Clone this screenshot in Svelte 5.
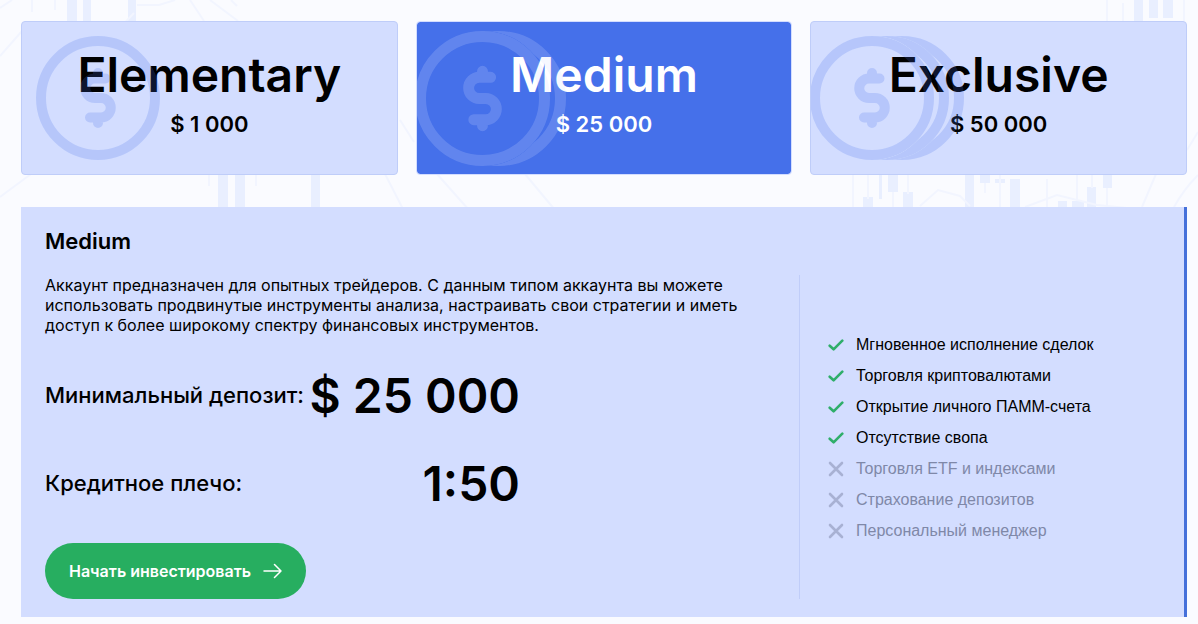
<script>
  const plans = [
    { name: 'Elementary', price: '$ 1 000', coins: 1, r: 57, step: 0, stroke: 10 },
    { name: 'Medium', price: '$ 25 000', coins: 2, r: 62, step: 16, stroke: 11 },
    { name: 'Exclusive', price: '$ 50 000', coins: 3, r: 57, step: 15, stroke: 10 }
  ];
  const features = [
    { text: 'Мгновенное исполнение сделок', on: true },
    { text: 'Торговля криптовалютами', on: true },
    { text: 'Открытие личного ПАММ-счета', on: true },
    { text: 'Отсутствие свопа', on: true },
    { text: 'Торговля ETF и индексами', on: false },
    { text: 'Страхование депозитов', on: false },
    { text: 'Персональный менеджер', on: false }
  ];
  let selected = $state(1);
</script>

<div class="page">
  <svg class="backdrop" viewBox="0 0 1198 624" preserveAspectRatio="none" aria-hidden="true">
    <g fill="#e9efff">
      <path d="M67 0h10v30H67zM83 0h8v30h-8zM128 0h8v30h-8zM218 170h10v40h-10zM235 170h10v40h-10zM311 170h9v40h-9z" />
      <path d="M1134 0h9v30h-9zM1149 0h9v18h-9zM1163 0h10v18h-10zM965 170h9v40h-9zM888 170h10v22h-10zM903 192h10v20h-10zM863 197h10v15h-10zM980 170h10v13h-10zM995 179h10v4h-10zM1010 179h10v33h-10zM1058 201h9v9h-9zM1087 187h9v20h-9zM1072 201h12v9h-12zM1103 170h9v18h-9zM879 170h3v29h-3z" />
    </g>
    <g fill="none" stroke="#f2f5ff" stroke-width="2">
      <path d="M0 56L22 31M0 8l12-8M32 0v12M55 0v10M117 31l17-18M137 5h22l16-5M190 0l14 21M210 0l28 21M231 0l6 6" />
      <path d="M0 197l31-23M209 174v12M256 174v12M385 174l18 35M400 120l14 22M437 174l32 36M525 174l30 36" />
      <path d="M853 174v33M868 174v25M893 192v18M908 174v20M985 183v10M1000 174v36M1047 179v28M1077 174v27M1092 174v14M1107 188v19M920 206l18-16 22 6 10 10M1025 207l32-12 24 6 16 4 40 4M1142 207l14-33M1174 207q10-18 24-32M1187 150l11-18M1107 0v21M1123 3v18M1184 0v21" />
    </g>
  </svg>

  <div class="plans">
    {#each plans as plan, i}
      <button class="plan" class:active={selected === i} type="button" onclick={() => (selected = i)}>
        <span class="name">{plan.name}</span>
        <span class="price">{plan.price}</span>
        <span class="coin">
          <svg
            width={2 * plan.r + plan.stroke + (plan.coins - 1) * plan.step}
            height={2 * plan.r + plan.stroke}
            viewBox="{-plan.r - plan.stroke / 2} {-plan.r - plan.stroke / 2} {2 * plan.r + plan.stroke + (plan.coins - 1) * plan.step} {2 * plan.r + plan.stroke}"
            fill="none"
            stroke="currentColor"
            stroke-width={plan.stroke}
            stroke-linecap="round"
            aria-hidden="true"
          >
            <circle r={plan.r} />
            {#each Array(plan.coins - 1) as _, n}
              <mask id="coin-{i}-{n}" maskUnits="userSpaceOnUse" x="-80" y="-80" width="240" height="160">
                <rect x="-80" y="-80" width="240" height="160" fill="#fff" stroke="none" />
                <circle cx={n * plan.step} r={plan.r} fill="#000" stroke="#000" />
                <circle r={plan.r} fill="#000" stroke="#000" />
              </mask>
              <g mask="url(#coin-{i}-{n})">
                <circle cx={(n + 1) * plan.step} r={plan.r} />
              </g>
            {/each}
            <g transform="scale({plan.r / 57})" stroke-width="10">
              <path d="M7.500-19.500H-3a9.750 9.750 0 0 0 0 19.500H3a9.750 9.750 0 0 1 0 19.500H-8M0-25V-20M0 20V25" />
            </g>
          </svg>
        </span>
      </button>
    {/each}
  </div>

  <section class="details">
    <h2>Medium</h2>
    <div class="columns">
      <div class="main">
        <p>
          Аккаунт предназначен для опытных трейдеров. С данным типом аккаунта вы можете использовать
          продвинутые инструменты анализа, настраивать свои стратегии и иметь доступ к более широкому
          спектру финансовых инструментов.
        </p>
        <dl>
          <div><dt>Минимальный депозит:</dt><dd>$ 25 000</dd></div>
          <div><dt>Кредитное плечо:</dt><dd>1:50</dd></div>
        </dl>
        <a class="cta" href="#invest">
          Начать инвестировать
          <svg width="19" height="16" viewBox="0 0 19 16" fill="none" stroke="currentColor" stroke-width="1.500" stroke-linecap="round" stroke-linejoin="round" aria-hidden="true">
            <path d="M1 8H18M11.500 1.500L18 8L11.500 14.500" />
          </svg>
        </a>
      </div>
      <ul>
        {#each features as f}
          <li class:off={!f.on}>
            {#if f.on}
              <svg width="16" height="16" viewBox="0 0 16 16" fill="none" stroke="#2fae6a" stroke-width="2.600" stroke-linecap="round" stroke-linejoin="round" aria-hidden="true"><path d="M1.700 8.700L5.600 12.300L14.300 3.700" /></svg>
            {:else}
              <svg width="16" height="16" viewBox="0 0 16 16" fill="none" stroke="#a8b1d3" stroke-width="2.600" stroke-linecap="round" aria-hidden="true"><path d="M2 2L14 14M14 2L2 14" /></svg>
            {/if}
            <span>{f.text}</span>
          </li>
        {/each}
      </ul>
    </div>
  </section>
</div>

<style>
  :global(body) {
    margin: 0;
    background: #fafbff;
  }
  .page {
    position: relative;
    box-sizing: border-box;
    padding: 21px 11px 7px 21px;
    font-family: Inter, sans-serif;
    color: #000;
  }
  .backdrop {
    position: absolute;
    inset: 0;
    width: 100%;
    height: 100%;
  }
  .plans {
    position: relative;
    display: grid;
    grid-template-columns: repeat(3, 1fr);
    gap: 18px;
    margin-bottom: 32px;
  }
  .plan {
    position: relative;
    display: flex;
    flex-direction: column;
    align-items: center;
    padding: 22px 16px 32px;
    border: 1px solid #bfcdf9;
    border-radius: 4px;
    background: #d3ddff;
    font-family: inherit;
    color: #000;
    overflow: hidden;
    cursor: pointer;
  }
  .plan.active {
    border-color: #d3ddff;
    background: #4570ea;
    background-clip: padding-box;
    color: #fff;
  }
  .name {
    font-size: 48px;
    line-height: 62px;
    font-weight: 600;
  }
  .price {
    font-size: 22px;
    line-height: 36px;
    font-weight: 600;
  }
  .coin {
    position: absolute;
    inset: 0 auto 0 0;
    width: 152px;
    display: flex;
    align-items: center;
    justify-content: center;
    color: #4570ea;
    opacity: 0.2;
  }
  .coin svg {
    flex: none;
  }
  .active .coin {
    width: 148px;
    color: #d3ddff;
  }
  .details {
    position: relative;
    padding: 18px 24px;
    border-right: 3px solid #4570da;
    background: #d3ddff;
  }
  h2 {
    margin: 0 0 18px;
    font-size: 22px;
    line-height: 32px;
    font-weight: 600;
  }
  .columns {
    display: grid;
    grid-template-columns: 755px 1fr;
  }
  .main {
    padding-right: 48px;
    border-right: 1px solid #c0cdf9;
  }
  p {
    margin: 0;
    font-size: 16px;
    line-height: 20px;
  }
  dl {
    width: 475px;
    margin: 16px 0;
  }
  dl div {
    display: flex;
    align-items: center;
    justify-content: space-between;
    height: 88px;
  }
  dt {
    font-size: 22px;
    font-weight: 500;
    white-space: nowrap;
  }
  dd {
    margin: 0;
    font-size: 48px;
    font-weight: 600;
    white-space: nowrap;
  }
  .cta {
    display: inline-flex;
    align-items: center;
    gap: 12px;
    height: 56px;
    padding: 0 24px;
    border-radius: 28px;
    background: #27ae60;
    color: #fff;
    font-size: 16px;
    font-weight: 600;
    text-decoration: none;
    vertical-align: top;
  }
  ul {
    display: flex;
    flex-direction: column;
    justify-content: center;
    gap: 11px;
    margin: 0;
    padding: 2px 0 0 28px;
    list-style: none;
    font-family: "Liberation Sans", Arial, sans-serif;
    font-size: 16px;
    line-height: 20px;
  }
  li {
    display: flex;
    align-items: center;
    gap: 12px;
  }
  .off {
    color: #7f88a8;
  }
</style>
